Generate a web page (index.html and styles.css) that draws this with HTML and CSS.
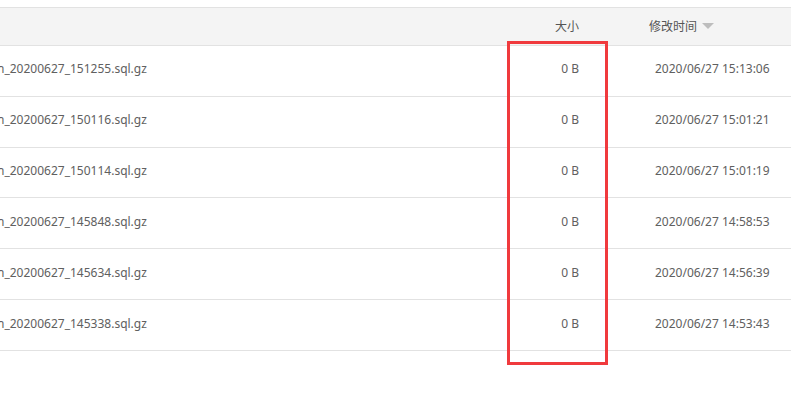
FILE: index.html
```html
<!DOCTYPE html>
<html lang="zh">
<head>
    <meta charset="UTF-8">
    <title>备份文件</title>
    <link rel="stylesheet" href="styles.css">
</head>
<body>
    <div class="file-table">
        <div class="row head">
            <div class="cell name"></div>
            <div class="cell size">大小</div>
            <div class="cell time">修改时间<span class="sort-arrow"></span></div>
        </div>
        <div class="row">
            <div class="cell name"><span class="clip">n_20200627_151255.sql.gz</span></div>
            <div class="cell size">0 B</div>
            <div class="cell time">2020/06/27 15:13:06</div>
        </div>
        <div class="row">
            <div class="cell name"><span class="clip">n_20200627_150116.sql.gz</span></div>
            <div class="cell size">0 B</div>
            <div class="cell time">2020/06/27 15:01:21</div>
        </div>
        <div class="row">
            <div class="cell name"><span class="clip">n_20200627_150114.sql.gz</span></div>
            <div class="cell size">0 B</div>
            <div class="cell time">2020/06/27 15:01:19</div>
        </div>
        <div class="row">
            <div class="cell name"><span class="clip">n_20200627_145848.sql.gz</span></div>
            <div class="cell size">0 B</div>
            <div class="cell time">2020/06/27 14:58:53</div>
        </div>
        <div class="row">
            <div class="cell name"><span class="clip">n_20200627_145634.sql.gz</span></div>
            <div class="cell size">0 B</div>
            <div class="cell time">2020/06/27 14:56:39</div>
        </div>
        <div class="row">
            <div class="cell name"><span class="clip">n_20200627_145338.sql.gz</span></div>
            <div class="cell size">0 B</div>
            <div class="cell time">2020/06/27 14:53:43</div>
        </div>
        <div class="highlight"></div>
    </div>
</body>
</html>
```

FILE: styles.css
```css
html, body {
    height: 100%;
}
body {
    margin: 0;
    background: #fff;
    font-family: "Noto Sans", "Noto Sans CJK SC", sans-serif;
    font-size: 12px;
    color: #606060;
    overflow: hidden;
}
.file-table {
    position: relative;
    margin-top: 7px;
    padding-bottom: 40px;
    border-top: 1px solid #e2e2e2;
}
.row {
    display: grid;
    grid-template-columns: 1fr 90px 192px;
    align-items: center;
    box-sizing: border-box;
    height: 50.83px;
    padding-bottom: 4px;
    border-bottom: 1px solid #e2e2e2;
}
.row.head {
    height: 38px;
    padding-bottom: 1px;
    background: #f4f4f4;
    color: #555;
}
.cell.name {
    overflow: hidden;
    white-space: nowrap;
}
.clip {
    margin-left: -3px;
}
.cell.size {
    text-align: right;
    padding-right: 20px;
}
.cell.time {
    padding-left: 56px;
    white-space: nowrap;
}
.head .cell.time {
    padding-left: 50px;
    display: flex;
    align-items: center;
    gap: 5px;
}
.sort-arrow {
    display: inline-block;
    width: 0;
    height: 0;
    border-left: 6px solid transparent;
    border-right: 6px solid transparent;
    border-top: 6px solid #bdbdbd;
}
.highlight {
    position: absolute;
    left: 507px;
    top: 33px;
    width: 95px;
    height: 318px;
    border: 3px solid #f03a3d;
}
```
